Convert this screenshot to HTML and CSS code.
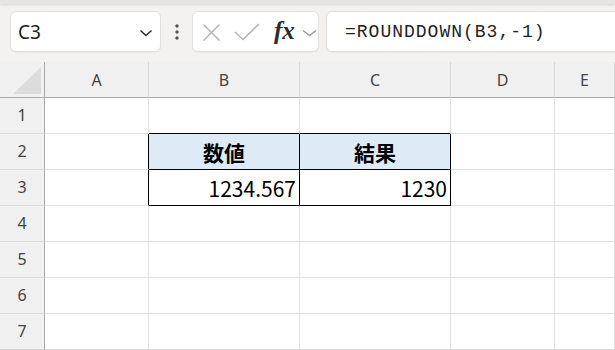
FILE: index.html
```html
<!DOCTYPE html>
<html lang="ja">
<head>
    <meta charset="UTF-8">
    <title>ROUNDDOWN</title>
    <link rel="stylesheet" href="styles.css">
</head>
<body>
    <div class="topband"></div>
    <div class="toolbar">
        <div class="box namebox">
            <span class="cellref">C3</span>
            <svg class="chev" width="14" height="8" viewBox="0 0 14 8"><polyline points="1.5,1.5 7,6.5 12.5,1.5" fill="none" stroke="#333" stroke-width="1.6"/></svg>
        </div>
        <div class="dots">
            <svg width="6" height="18" viewBox="0 0 6 18"><circle cx="3" cy="3" r="1.7" fill="#555"/><circle cx="3" cy="9" r="1.7" fill="#555"/><circle cx="3" cy="15" r="1.7" fill="#555"/></svg>
        </div>
        <div class="box fxbox">
            <svg class="icon-x" width="19" height="19" viewBox="0 0 19 19"><path d="M1.5 1.5 L17.5 17.5 M17.5 1.5 L1.5 17.5" stroke="#b4b4b4" stroke-width="1.5" fill="none"/></svg>
            <svg class="icon-ok" width="26" height="18" viewBox="0 0 26 18"><polyline points="1,9 9,16.5 25,1" fill="none" stroke="#b4b4b4" stroke-width="1.5"/></svg>
            <span class="fx">fx</span>
            <svg class="chev2" width="15" height="8" viewBox="0 0 15 8"><polyline points="1,1.5 7.5,6.5 14,1.5" fill="none" stroke="#9a9a9a" stroke-width="1.4"/></svg>
        </div>
        <div class="box formula">=ROUNDDOWN(B3,-1)</div>
    </div>
    <div class="sheet">
        <div class="corner"><div class="tri"></div></div>
        <div class="colhead">A</div>
        <div class="colhead">B</div>
        <div class="colhead">C</div>
        <div class="colhead">D</div>
        <div class="colhead">E</div>

        <div class="rowhead">1</div>
        <div class="cell"></div><div class="cell above"></div><div class="cell above"></div><div class="cell"></div><div class="cell"></div>

        <div class="rowhead">2</div>
        <div class="cell left-of"></div>
        <div class="cell tbl head">数値</div>
        <div class="cell tbl head">結果</div>
        <div class="cell"></div><div class="cell"></div>

        <div class="rowhead">3</div>
        <div class="cell left-of"></div>
        <div class="cell tbl num">1234.567</div>
        <div class="cell tbl num">1230</div>
        <div class="cell"></div><div class="cell"></div>

        <div class="rowhead">4</div>
        <div class="cell"></div><div class="cell"></div><div class="cell"></div><div class="cell"></div><div class="cell"></div>
        <div class="rowhead">5</div>
        <div class="cell"></div><div class="cell"></div><div class="cell"></div><div class="cell"></div><div class="cell"></div>
        <div class="rowhead">6</div>
        <div class="cell"></div><div class="cell"></div><div class="cell"></div><div class="cell"></div><div class="cell"></div>
        <div class="rowhead">7</div>
        <div class="cell"></div><div class="cell"></div><div class="cell"></div><div class="cell"></div><div class="cell"></div>
    </div>
</body>
</html>
```

FILE: styles.css
```css
*{
    margin: 0;
    padding: 0;
    box-sizing: border-box;
}
html, body{
    background: #f3f2f1;
    overflow: hidden;
    font-family: "Noto Sans", "Liberation Sans", sans-serif;
}

.topband{
    height: 4px;
    background: #e6e4e3;
    box-shadow: 0 1px 3px rgba(0,0,0,0.12);
}
.toolbar{
    display: flex;
    align-items: flex-start;
    height: 58px;
    padding: 7px 0 0 10px;
}
.box{
    height: 41px;
    background: #fff;
    border: 1px solid #e1e0df;
    border-radius: 6px;
    box-shadow: 0 1px 1px rgba(0,0,0,0.04);
    display: flex;
    align-items: center;
}
.namebox{
    width: 151px;
    padding-left: 7px;
}
.cellref{
    font-size: 19px;
    color: #222;
    flex: 1;
}
.chev{
    margin-right: 7px;
    margin-top: 2px;
}
.dots{
    width: 31px;
    height: 41px;
    display: flex;
    align-items: center;
    justify-content: center;
}
.fxbox{
    width: 127px;
    padding-left: 9px;
}
.icon-x{
    margin-top: 1px;
}
.icon-ok{
    margin-left: 13px;
    margin-top: 1px;
}
.fx{
    font-family: "Liberation Serif", "DejaVu Serif", serif;
    font-style: italic;
    font-weight: bold;
    font-size: 25px;
    color: #2b2b2b;
    margin-left: 14px;
    margin-top: -2px;
}
.chev2{
    margin-left: 7px;
    margin-top: 2px;
}
.formula{
    flex: 1;
    margin-left: 7px;
    margin-right: -10px;
    padding-left: 18px;
    font-family: "Liberation Mono", "DejaVu Sans Mono", monospace;
    font-size: 18px;
    letter-spacing: 1px;
    color: #1f1f1f;
}

.sheet{
    display: grid;
    grid-template-columns: 45px 104px 151px 151px 104px 1fr;
    grid-auto-rows: 36px;
    background: #fff;
}
.corner, .colhead{
    background: #f0f0f0;
    border-bottom: 1px solid #a9a9a9;
}
.corner{
    border-right: 1px solid #a9a9a9;
    position: relative;
}
.tri{
    position: absolute;
    right: 3px;
    bottom: 3px;
    width: 0;
    height: 0;
    border-left: 28px solid transparent;
    border-bottom: 27px solid #dcdcdc;
}
.colhead{
    border-right: 1px solid #dadada;
    display: flex;
    align-items: center;
    justify-content: center;
    font-size: 16px;
    color: #444;
    padding-top: 1px;
}
.rowhead{
    background: #f0f0f0;
    border-right: 1px solid #a9a9a9;
    border-bottom: 1px solid #dcdcdc;
    display: flex;
    align-items: center;
    justify-content: center;
    font-size: 16px;
    color: #444;
    padding-bottom: 1px;
}
.cell{
    background: #fff;
    border-right: 1px solid #e1e1e1;
    border-bottom: 1px solid #e1e1e1;
    font-family: "Noto Sans CJK JP", sans-serif;
    font-size: 21px;
    color: #000;
    display: flex;
    align-items: center;
}
.cell.above{
    border-bottom-color: #000;
}
.cell.left-of{
    border-right-color: #000;
}
.cell.tbl{
    border-right-color: #000;
    border-bottom-color: #000;
}
.head{
    background: #ddebf7;
    font-weight: bold;
    justify-content: center;
}
.num{
    justify-content: flex-end;
    padding-right: 3px;
}
```
